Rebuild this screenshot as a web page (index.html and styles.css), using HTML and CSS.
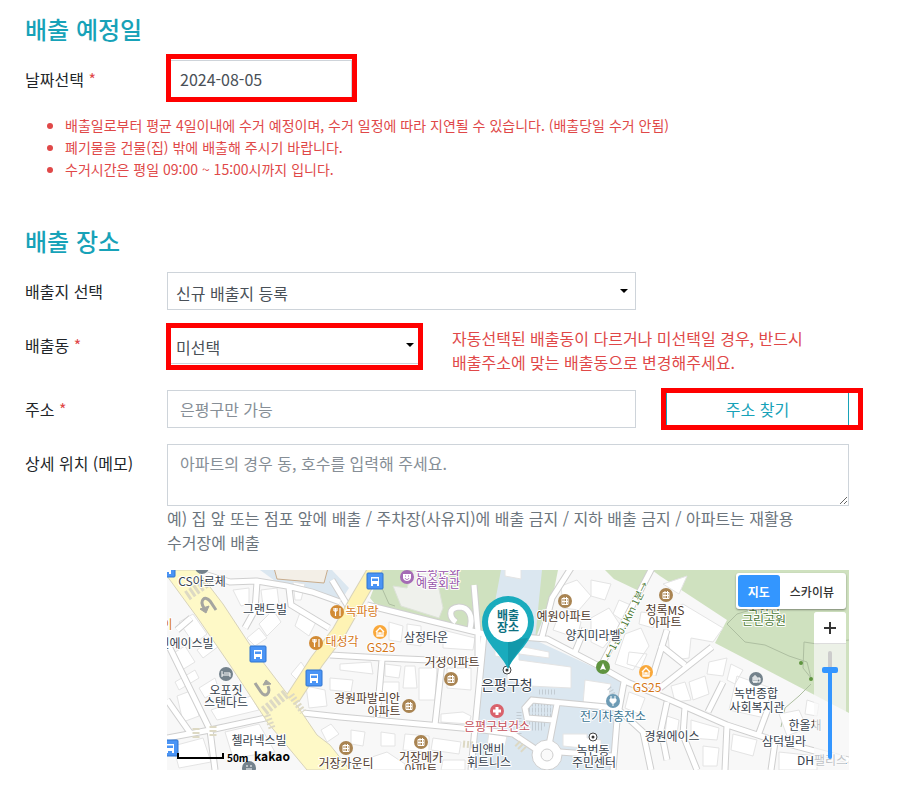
FILE: index.html
```html
<!DOCTYPE html>
<html lang="ko">
  <head>
    <meta charset="UTF-8" />
    <meta name="viewport" content="width=device-width, initial-scale=1.0" />
    <title>배출 신청</title>
    <link rel="stylesheet" href="styles.css">
  </head>

  <body>
    <main>
      <section class="date-section">
        <h2>배출 예정일</h2>
        <div class="form-row">
          <label for="date">날짜선택 <span class="required">*</span></label>
          <div class="field date-field">
            <input type="text" id="date" value="2024-08-05" />
            <span class="mark"></span>
          </div>
        </div>
        <ul class="notice">
          <li>배출일로부터 평균 4일이내에 수거 예정이며, 수거 일정에 따라 지연될 수 있습니다. (배출당일 수거 안됨)</li>
          <li>폐기물을 건물(집) 밖에 배출해 주시기 바랍니다.</li>
          <li>수거시간은 평일 09:00 ~ 15:00시까지 입니다.</li>
        </ul>
      </section>

      <section>
        <h2>배출 장소</h2>
        <div class="form-row">
          <label for="place">배출지 선택</label>
          <div class="cols">
            <div class="field select">
              <select id="place">
                <option>신규 배출지 등록</option>
              </select>
            </div>
          </div>
        </div>

        <div class="form-row">
          <label for="dong">배출동 <span class="required">*</span></label>
          <div class="cols cols-dong">
            <div class="field select dong-field">
              <select id="dong">
                <option>미선택</option>
              </select>
              <span class="mark"></span>
            </div>
            <p class="warning">자동선택된 배출동이 다르거나 미선택일 경우, 반드시 배출주소에 맞는 배출동으로 변경해주세요.</p>
          </div>
        </div>

        <div class="form-row">
          <label for="address">주소 <span class="required">*</span></label>
          <div class="cols">
            <div class="field">
              <input type="text" id="address" placeholder="은평구만 가능" />
            </div>
            <div class="field find-field">
              <button type="button" class="btn-find">주소 찾기</button>
              <span class="mark"></span>
            </div>
          </div>
        </div>

        <div class="form-row">
          <label for="memo">상세 위치 (메모)</label>
          <div>
            <textarea id="memo" placeholder="아파트의 경우 동, 호수를 입력해 주세요."></textarea>
            <p class="hint">예) 집 앞 또는 점포 앞에 배출 / 주차장(사유지)에 배출 금지 / 지하 배출 금지 / 아파트는 재활용 수거장에 배출</p>

            <div class="map">
              <svg class="map-canvas" viewBox="0 0 682 200" preserveAspectRatio="xMidYMid slice">
                <defs>
                  <g id="apt">
                    <circle r="7" fill="#a98452" />
                    <path d="M-3 -2.500H3V3.500H-3ZM-1 -4V3.500M1.500 -4V3.500M-3 .5H3" fill="none" stroke="#fff" stroke-width="1" />
                  </g>
                  <g id="bus">
                    <rect x="-8" y="-8" width="16" height="16" rx="1" fill="#4a94f5" stroke="#2f74d0" />
                    <path d="M-4 -4H4V3H-4Z" fill="#fff" />
                    <path d="M-3 -2.500H3V0H-3Z" fill="#4a94f5" />
                    <path d="M-3 3V5M3 3V5" stroke="#fff" stroke-width="2" />
                  </g>
                  <g id="food">
                    <circle r="7" fill="#d28b35" />
                    <path d="M-3 -4V-1M-1.500 -4V4M0 -4V-1M-3 -1H0M3 -4V4" fill="none" stroke="#fff" stroke-width="1.200" />
                  </g>
                  <g id="store">
                    <circle r="7" fill="#f9a83b" />
                    <path d="M-4 0L0 -4L4 0M-3 -1V4H3V-1M-1 4V1H1V4" fill="none" stroke="#fff" stroke-width="1.300" />
                  </g>
                  <g id="spot">
                    <circle r="4" fill="#fff" stroke="#444" />
                    <circle r="1.500" fill="#333" />
                  </g>
                  <path id="roads" d="M40 5L63 12L90 11L120 16L145 22L173 32M90 12L88 40L78 58M122 18L124 35L162 58M0 168L43 160L103 147M136 143L173 147L263 155L316 160L346 164L370 180M0 72L43 160L48 200M10 60L24 48M0 130L24 164M165 10L182 38M200 35L260 50L317 64L380 69L430 95L460 112L503 130L560 155L606 170L682 190M163 85L216 88L310 92M215 90L210 147M275 92L268 155M317 64L304 200M307 15L311 62M404 -2L385 28L375 67M485 -2L436 92M457 112L450 150L446 200M452 140L476 162L484 200M450 138L365 130L358 138L360 148L386 150M390 134L382 175M393 182L446 186M418 58L408 82M493 118L545 77M493 75L518 95M500 60L486 105M518 137L516 165L530 200M500 132L494 160L500 190M560 155L558 200M541 142L556 112M592 163L602 136M608 172L604 200M311 92L311 64" />
                </defs>

                <rect width="682" height="200" fill="#f8f8f8" />

                <!-- parks and public ground -->
                <path fill="#dbe7f0" d="M93 0L115 16L145 20L173 32L182 18L165 0ZM332 0H378V45L368 70L450 108L457 116L450 158L446 200H304L316 66L325 45Z" />
                <path fill="#f3efe7" stroke="#c8ac8c" d="M107 -2L110 9L157 13L161 -2Z" />
                <path fill="#cfe1bf" d="M214 0L203 28L213 40L310 61L317 62L325 48L334 0ZM375 0H391L386 25L376 48L368 70ZM438 0L447 9L470 20L485 0ZM485 0L493 6L560 50L548 73L682 143V0Z" />
                <path fill="#eff1ec" stroke="#dde2d8" d="M226 16L240 18L246 0H268L276 38L272 48L234 36Z" />
                <path fill="none" stroke="#aebfa1" d="M214 16L222 34L228 36M682 70L664 72L650 74L637 72L636 98L644 108L640 92L622 86L598 75L578 72L560 54L570 44L590 38M644 114L632 126L618 138L614 157" />

                <!-- buildings -->
                <path class="building" d="M12 52L26 44L40 64L27 74ZM30 80L46 68L52 76L36 88ZM5 84L18 76L28 92L15 100ZM8 112L28 100L32 108L12 120ZM32 118L48 108L52 120L38 128ZM10 126L26 120L32 146L16 152ZM44 140L84 126L92 140L50 150ZM6 176L36 168L44 192L12 198ZM58 162L92 154L108 182L66 188Z" />
                <path class="building" d="M66 20L82 18L82 34L74 36ZM94 20L110 18L112 34L96 36ZM92 54L106 40L114 52L100 66ZM80 68L92 58L100 68L88 76ZM126 12L138 14L134 30L128 30ZM134 40L150 50L142 66L128 56ZM124 104L134 92L141 102L132 112ZM139 116L158 120L160 136L142 138ZM154 160L164 154L172 164L160 172Z" />
                <path class="building" d="M222 52L236 56L234 72L222 70ZM240 54L254 56L254 76L240 74ZM276 60L308 68L306 80L276 78ZM173 94L204 92L206 104L173 100ZM163 108L186 110L184 122L163 120ZM218 94L234 96L232 108L218 106ZM238 96L248 96L250 118L236 118ZM252 98L270 98L268 130L252 130ZM216 112L232 112L232 126L214 126ZM280 98L304 98L304 120L280 118ZM274 144L296 142L304 146L302 154L274 152ZM184 160L198 162L196 176L184 174ZM214 162L228 164L228 176L214 176ZM238 164L262 166L262 182L236 180ZM266 168L294 172L292 184L264 180ZM202 188L220 182L238 194V200H202ZM276 190H298V200H274Z" />
                <path class="building" d="M328 86L340 88V110L362 116L404 118V97L352 90V84L328 80ZM352 76L382 82V88L352 84ZM418 110L444 114L440 136L416 134ZM396 164H420V168L434 170V180L396 176ZM322 162L340 166L338 176H320ZM338 -2H354V9L338 6Z" />
                <path class="building" d="M394 16L410 10L424 26L412 40L396 38ZM424 10L444 14L438 30L424 26ZM392 44L414 52L410 68L386 60ZM424 48L442 38L454 56L436 78L424 72ZM452 30L466 36L458 52L446 44ZM458 64L474 58L482 76L466 100L448 94ZM474 42L490 44L486 58L472 54ZM462 82L480 84L474 98L460 94ZM462 122L478 128L472 144L458 138Z" />
                <path class="building" d="M500 42L516 34L556 58L546 72L524 68L522 88L508 90L502 78ZM520 6L512 24L496 14ZM542 92L560 88L556 106L540 104ZM564 94L576 100L568 114L560 110ZM522 112L538 106L542 124L526 130ZM504 116L518 112L524 130L508 132ZM570 106L604 118L598 148L562 140ZM500 146L512 150L510 164H498ZM524 150L552 158L550 170L524 168ZM536 176L552 178L550 196H536ZM566 164L590 170L586 186L564 180ZM612 144L632 140L640 158L620 166ZM640 130L652 134L650 146L638 144ZM612 182L650 186V200H612Z" />
                <path class="parking" d="M352 142V164M362 134H386M362 140H384M362 146H384M372 122H390M362 154H378M365 158H377M308 20V42M442 118C448 124 447 130 444 136" />

                <!-- roads -->
                <use href="#roads" class="road-edge" />
                <path d="M302 62C308 44 300 37 292 37C280 38 283 48 289 52" class="road-edge" />
                <circle cx="380" cy="185" r="15" fill="#fff" stroke="#cfcfcf" />
                <use href="#roads" class="road" />
                <path d="M302 62C308 44 300 37 292 37C280 38 283 48 289 52" class="road" />
                <circle cx="380" cy="185" r="6" fill="#fafafa" stroke="#cfcfcf" />
                <path d="M126 128L150 91L172 62L190 30L210 -4" fill="none" stroke="#d8d3ba" stroke-width="15" />
                <path d="M2 0H30L56 34L83 75L121 125L131 137L150 165L163 175L183 200H140L101 153L63 95L30 47L0 6Z" fill="#fef9c7" stroke="#d8d3ba" />
                <path d="M124 131L150 91L172 62L190 30L210 -4" fill="none" stroke="#fef3b4" stroke-width="13" />
                <path class="crossing" d="M20 26L42 11M97 141L120 123" />
                <path class="crossing narrow" d="M124 125L136 142M100 145L105 158M29 158V168M46 156V166M296 174L307 175M350 173L358 181" />
                <g class="turn-arrow">
                  <path d="M49 40L43 31C38 25 32 30 37 38" />
                  <path d="M33 39L42 36L39 43Z" class="head" />
                  <path d="M88 113L94 122C98 128 104 124 101 116" />
                  <path d="M96 115L99 110L104 114Z" class="head" />
                </g>

                <!-- place icons -->
                <use href="#bus" x="0" y="-1" />
                <use href="#bus" x="91" y="84" />
                <use href="#bus" x="147" y="108" />
                <use href="#bus" x="208" y="11" />
                <use href="#bus" x="3" y="178" />
                <use href="#apt" x="398" y="31" />
                <use href="#apt" x="499" y="25" />
                <use href="#apt" x="284" y="109" />
                <use href="#apt" x="242" y="136" />
                <use href="#apt" x="179" y="178" />
                <use href="#apt" x="254" y="172" />
                <use href="#food" x="149" y="73" />
                <use href="#food" x="170" y="42" />
                <use href="#store" x="213" y="62" />
                <use href="#store" x="479" y="102" />
                <g fill="#74828c">
                  <circle cx="35" cy="-3" r="7" />
                  <circle cx="59" cy="104" r="7" />
                  <circle cx="82" cy="198" r="7" />
                  <circle cx="589" cy="109" r="7" />
                </g>
                <path d="M55 101V107M55 105H63V107M57 103H63V105" fill="none" stroke="#fff" />
                <path d="M79 196H81M83 196H85M79 199H85" fill="none" stroke="#fff" />
                <path d="M586 107H590V112H586ZM588 105V112M591 108H593V112H586M586 109H593" fill="none" stroke="#fff" />
                <circle cx="240" cy="7" r="7" fill="#a56bb5" />
                <path d="M236 4H244V8C243 12 237 12 236 8Z" fill="#fff" />
                <path d="M238 6H239M241 6H242M238 8C239 10 241 10 242 8" fill="none" stroke="#a56bb5" />
                <circle cx="330" cy="141" r="7" fill="#d9626b" />
                <path d="M330 137V145M326 141H334" stroke="#fff" stroke-width="3" />
                <circle cx="446" cy="131" r="7" fill="#6d9bb5" />
                <path d="M443 129H449V131C448 134 444 134 443 131ZM444 126V129M448 126V129M446 133V136" fill="#fff" stroke="#fff" />
                <circle cx="436" cy="97" r="7" fill="#5f9440" />
                <path d="M436 93L439 100L436 99L433 100Z" fill="#fff" />
                <use href="#spot" x="340" y="100" />
                <use href="#spot" x="426" y="167" />
                <circle cx="634" cy="93" r="2" fill="#5f9440" />
                <circle cx="644" cy="109" r="2" fill="#5f9440" />

                <!-- place names -->
                <g class="names park">
                  <text x="597" y="43">북한산</text>
                  <text x="597" y="55">근린공원</text>
                  <text x="0" y="4" class="small" transform="translate(459 50) rotate(-63)">←1분 0.1Km 1분→</text>
                </g>
                <g class="names">
                  <text x="35" y="16">CS아르체</text>
                  <text x="98" y="44">그랜드빌</text>
                  <text x="19" y="78">린에이스빌</text>
                  <text x="59" y="125">오포짓</text>
                  <text x="59" y="137">스탠다드</text>
                  <text x="92" y="175">첼라넥스빌</text>
                  <text x="259" y="72">삼정타운</text>
                  <text x="321" y="184">비앤비</text>
                  <text x="322" y="197">휘트니스</text>
                  <text x="426" y="70">양지미라벨</text>
                  <text x="426" y="185">녹번동</text>
                  <text x="427" y="197">주민센터</text>
                  <text x="505" y="171">경원에이스</text>
                  <text x="589" y="128">녹번종합</text>
                  <text x="590" y="142">사회복지관</text>
                  <text x="638" y="160">한올채</text>
                  <text x="617" y="176">삼덕빌라</text>
                  <text x="655" y="195">DH팰리스</text>
                  <text x="340" y="120" class="big">은평구청</text>
                </g>
                <g class="names apartment">
                  <text x="285" y="97">거성아파트</text>
                  <text x="200" y="133">경원파발리안</text>
                  <text x="217" y="146">아파트</text>
                  <text x="254" y="192">거장메카</text>
                  <text x="254" y="204">아파트</text>
                  <text x="179" y="198">거장카운티</text>
                  <text x="397" y="51">예원아파트</text>
                  <text x="498" y="45">청록MS</text>
                  <text x="498" y="57">아파트</text>
                </g>
                <g class="names shop">
                  <text x="0" y="59">이</text>
                  <text x="175" y="76">대성각</text>
                  <text x="195" y="46">녹파랑</text>
                  <text x="214" y="82">GS25</text>
                  <text x="480" y="122">GS25</text>
                </g>
                <g class="names culture">
                  <text x="271" y="6">은평문화</text>
                  <text x="271" y="18">예술회관</text>
                </g>
                <text x="330" y="161" class="names health">은평구보건소</text>
                <text x="446" y="151" class="names charge">전기차충전소</text>

                <!-- selected place -->
                <path d="M341 99C335 84 315 72 315 52A26 26 0 0 1 367 52C367 72 347 84 341 99Z" fill="#19abbd" />
                <path d="M341 99V70L361 68C354 79 345 88 341 99Z" fill="#1298aa" />
                <circle cx="341" cy="52" r="20" fill="#fff" />
                <g class="pin-text">
                  <text x="341" y="50">배출</text>
                  <text x="341" y="62">장소</text>
                </g>

                <path d="M11 183V188H56V183" fill="none" stroke="#000" stroke-width="2" />
                <text x="60" y="192" class="scale">50m</text>
                <text x="87" y="191" class="brand">kakao</text>
              </svg>

              <div class="map-type">
                <button type="button" class="active">지도</button>
                <button type="button">스카이뷰</button>
              </div>
              <div class="map-zoom">
                <button type="button" aria-label="확대">
                  <svg width="12" height="12" viewBox="0 0 12 12">
                    <path d="M6 0V12M0 6H12" stroke="#333" stroke-width="2" />
                  </svg>
                </button>
                <input type="range" min="1" max="14" value="12" aria-label="지도 확대 수준" />
              </div>
            </div>
          </div>
        </div>
      </section>
    </main>
  </body>
</html>
```

FILE: styles.css
```css
* {
  box-sizing: border-box;
}

body {
  margin: 0;
  font-family: "Noto Sans CJK KR", sans-serif;
  font-size: 16px;
  line-height: 24px;
  word-break: keep-all;
  color: #212529;
  background: #fff;
}

main {
  padding: 11px 62px 19px 25px;
}

h2 {
  margin: 0 0 13px;
  font-size: 24px;
  line-height: 36px;
  font-weight: 500;
  color: #17a2b8;
}

p {
  margin: 0;
}

.date-section {
  margin-bottom: 43px;
}

/* Form */
.form-row {
  display: grid;
  grid-template-columns: 142px 1fr;
  margin-bottom: 16px;
}

.form-row:last-child {
  margin-bottom: 0;
}

.form-row > label {
  padding-top: 7px;
}

.required {
  color: #e04848;
}

.cols {
  display: grid;
  grid-template-columns: 469fr 183fr;
  gap: 30px;
}

.cols-dong {
  grid-template-columns: 255fr 397fr;
}

.field {
  position: relative;
  height: 38px;
}

.date-field {
  width: 185px;
}

input[type="text"],
select,
textarea {
  display: block;
  width: 100%;
  height: 38px;
  padding: 6px 12px;
  border: 1px solid #ced4da;
  border-radius: 0;
  background: #fff;
  color: #495057;
  font: inherit;
}

select {
  appearance: none;
  padding: 8px 8px 4px;
}

.select::after {
  content: "";
  position: absolute;
  top: 17px;
  right: 8px;
  border: 4px solid transparent;
  border-top-color: #000;
  border-bottom: 0;
  pointer-events: none;
}

textarea {
  height: 62px;
}

::placeholder {
  color: #868e96;
  opacity: 1;
}

.btn-find {
  width: 100%;
  height: 38px;
  border: 1px solid #17a2b8;
  background: #fff;
  color: #17a2b8;
  font: inherit;
  cursor: pointer;
}

/* Red frame over the required fields */
.mark {
  position: absolute;
  inset: -6px -5px -4px -1px;
  border: 5px solid #f00;
  pointer-events: none;
}

.dong-field .mark {
  inset: -3px -1px -6px -1px;
}

.find-field .mark {
  inset: -2px -14px -2px -5px;
}

.notice {
  margin: 0;
  padding-left: 40px;
  list-style: none;
  font-size: 14px;
  line-height: 22px;
  color: #e04848;
}

.notice li {
  position: relative;
}

.notice li::before {
  content: "";
  position: absolute;
  top: 9px;
  left: -18px;
  width: 6px;
  height: 6px;
  border-radius: 50%;
  background: #e04848;
}

.warning {
  color: #e04848;
}

.hint {
  margin-bottom: 16px;
  color: #6c757d;
}

/* Map */
.map {
  position: relative;
  height: 200px;
  overflow: hidden;
}

.map-canvas {
  display: block;
  width: 100%;
  height: 100%;
}

.building {
  fill: #fff;
  stroke: #e4e4e4;
}

.parking {
  fill: none;
  stroke: #c3ccd3;
  stroke-dasharray: 1 2;
  stroke-width: 5;
}

.road-edge {
  fill: none;
  stroke: #cfcfcf;
  stroke-width: 7;
}

.road {
  fill: none;
  stroke: #fff;
  stroke-width: 5;
}

.crossing {
  stroke: #ddd9c4;
  stroke-width: 10;
  stroke-dasharray: 3 2;
}

.crossing.narrow {
  stroke-width: 7;
  stroke-dasharray: 2 2;
}

.turn-arrow {
  fill: none;
  stroke: #a5a5a0;
  stroke-width: 3;
}

.turn-arrow .head {
  fill: #a5a5a0;
  stroke-width: 1;
}

.names {
  fill: #37424d;
  stroke: #fff;
  stroke-width: 2px;
  stroke-linejoin: round;
  paint-order: stroke;
  font-size: 12px;
  text-anchor: middle;
}

.names .big {
  font-size: 14px;
}

.names .small {
  font-size: 10px;
}

.apartment {
  fill: #4f3a2c;
}

.shop {
  fill: #d57717;
}

.culture {
  fill: #9651a8;
}

.health {
  fill: #c4505a;
}

.charge {
  fill: #3a7592;
}

.park {
  fill: #4d7a36;
}

.pin-text {
  fill: #0d7080;
  font-size: 12px;
  font-weight: 700;
  text-anchor: middle;
}

.scale {
  font-size: 10px;
  font-weight: 700;
}

.brand {
  font-size: 12px;
  font-weight: 700;
}

.map-type {
  position: absolute;
  top: 3px;
  right: 3px;
  display: flex;
  padding: 2px;
  border-radius: 3px;
  background: #fff;
  box-shadow: 0 1px 2px rgba(0, 0, 0, 0.4);
}

.map-type button {
  height: 32px;
  padding: 0 10px;
  border: 0;
  border-radius: 3px;
  background: #fff;
  color: #333;
  font: 500 12px "Noto Sans CJK KR", sans-serif;
  cursor: pointer;
}

.map-type .active {
  background: #3396ff;
  color: #fff;
  font-weight: 700;
}

.map-zoom {
  position: absolute;
  top: 42px;
  right: 3px;
  display: flex;
  flex-direction: column;
  align-items: center;
  width: 32px;
  height: 155px;
  border-radius: 3px;
  background: rgba(248, 248, 248, 0.7);
}

.map-zoom button {
  display: flex;
  align-items: center;
  justify-content: center;
  width: 32px;
  height: 32px;
  padding: 0;
  border: 0;
  border-bottom: 1px solid #ddd;
  border-radius: 3px 3px 0 0;
  background: #fff;
}

.map-zoom input {
  appearance: none;
  writing-mode: vertical-lr;
  direction: rtl;
  width: 16px;
  height: 108px;
  margin: 7px 0 0;
  background: transparent;
}

.map-zoom input::-webkit-slider-runnable-track {
  width: 4px;
  height: 108px;
  border-radius: 2px;
  background: linear-gradient(#ccc 18px, #3396ff 18px);
}

.map-zoom input::-webkit-slider-thumb {
  appearance: none;
  width: 16px;
  height: 6px;
  margin-left: -6px;
  border-radius: 2px;
  background: #3396ff;
}
```
